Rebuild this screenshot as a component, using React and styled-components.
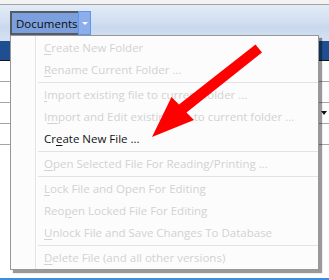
import styled, { createGlobalStyle } from "styled-components";

const GlobalStyle = createGlobalStyle`
  html, body {
    margin: 0;
    padding: 0;
    background: #ffffff;
  }
  body {
    font-family: "Open Sans", "Noto Sans", "DejaVu Sans", sans-serif;
  }
`;

const Page = styled.div`
  position: relative;
  width: 329px;
  height: 280px;
  overflow: hidden;
  display: flex;
  flex-direction: column;
  background: #ffffff;
`;

const TopStrip = styled.div`
  height: 4px;
  background: #f3f3f3;
  border-bottom: 1px solid #a3a3a3;
`;

const Toolbar = styled.div`
  height: 36px;
  box-sizing: border-box;
  padding: 6px 0 0 10px;
  display: flex;
  align-items: flex-start;
  background: linear-gradient(#e2ebf7 0%, #d3e0f1 45%, #c8d8ee 60%, #d4e1f2 100%);
`;

const DocButton = styled.div`
  height: 24px;
  box-sizing: border-box;
  padding: 0 0 0 4px;
  width: 68px;
  display: flex;
  align-items: center;
  border: 2px solid #555a63;
  border-right: none;
  background: #7ca0dd;
  color: #0c0c0c;
  font-size: 11.5px;
`;

const SplitArrow = styled.div`
  width: 13px;
  height: 24px;
  box-sizing: border-box;
  border: 1px solid #5e95e6;
  background: #8cafeb;
  display: flex;
  align-items: center;
  justify-content: center;
  &::after {
    content: "";
    border-left: 3px solid transparent;
    border-right: 3px solid transparent;
    border-top: 3px solid #ffffff;
    margin-top: 1px;
  }
`;

const HeaderRow = styled.div`
  height: 19px;
  background: #1f4f91;
  border-bottom: 1px solid #151515;
`;

const Row = styled.div`
  height: 20px;
  border-bottom: 1px solid #a5a5a5;
  display: flex;
  align-items: center;
  justify-content: flex-end;
  padding-right: 2px;
`;

const Caret = styled.span`
  border-left: 3px solid transparent;
  border-right: 3px solid transparent;
  border-top: 4px solid #111111;
  margin-top: -1px;
`;

const Spacer = styled.div`
  flex: 1;
`;

const StatusLine = styled.div`
  height: 2px;
  background: #3d8de2;
`;

const Menu = styled.div`
  position: absolute;
  left: 10px;
  top: 35px;
  width: 309px;
  height: 235px;
  box-sizing: border-box;
  padding-top: 1px;
  border: 1px solid #979797;
  background: #fcfcfc;
  box-shadow: 3px 3px 1px rgba(0, 0, 0, 0.4);
  &::before {
    content: "";
    position: absolute;
    left: 24px;
    top: 0;
    bottom: 0;
    width: 1px;
    background: #e2e3e3;
    border-right: 1px solid #ffffff;
  }
`;

const Item = styled.div`
  height: 22px;
  line-height: 22px;
  padding-left: 33px;
  font-size: 11.5px;
  white-space: nowrap;
  color: ${(props) => (props.disabled ? "#d2d2d2" : "#141414")};
  u {
    text-decoration: underline;
    text-underline-offset: 2px;
  }
`;

const Separator = styled.div`
  height: 3px;
  margin-left: 27px;
  display: flex;
  align-items: center;
  &::after {
    content: "";
    flex: 1;
    height: 1px;
    background: #e3e3e3;
  }
`;

const Pointer = styled.svg`
  position: absolute;
  left: 0;
  top: 0;
  width: 329px;
  height: 280px;
  pointer-events: none;
`;

const menuItems = [
  { key: "C", rest: "reate New Folder", disabled: true },
  { key: "R", rest: "ename Current Folder ...", disabled: true },
  "sep",
  { key: "I", rest: "mport existing file to current folder ...", disabled: true },
  { pre: "I", key: "m", rest: "port and Edit existing file to current folder ...", disabled: true },
  { pre: "Cr", key: "e", rest: "ate New File ..." },
  "sep",
  { key: "O", rest: "pen Selected File For Reading/Printing ...", disabled: true },
  "sep",
  { key: "L", rest: "ock File and Open For Editing", disabled: true },
  { pre: "Reo", key: "p", rest: "en Locked File For Editing", disabled: true },
  { key: "U", rest: "nlock File and Save Changes To Database", disabled: true },
  "sep",
  { key: "D", rest: "elete File (and all other versions)", disabled: true },
];

export default function App() {
  return (
    <Page>
      <GlobalStyle />
      <TopStrip />
      <Toolbar>
        <DocButton>Documents</DocButton>
        <SplitArrow />
      </Toolbar>
      <HeaderRow />
      <Row />
      <Row />
      <Row>
        <Caret />
      </Row>
      <Row />
      <Spacer />
      <StatusLine />

      <Menu>
        {menuItems.map((it, i) =>
          it === "sep" ? (
            <Separator key={i} />
          ) : (
            <Item key={i} disabled={it.disabled}>
              {it.pre}
              <u>{it.key}</u>
              {it.rest}
            </Item>
          )
        )}
      </Menu>

      <Pointer viewBox="0 0 329 280">
        <polygon
          points="255.5,44.5 262,52.5 186.5,112.5 194,120 152,137 171.5,97 179,104.5"
          fill="#ff0000"
        />
      </Pointer>
    </Page>
  );
}
